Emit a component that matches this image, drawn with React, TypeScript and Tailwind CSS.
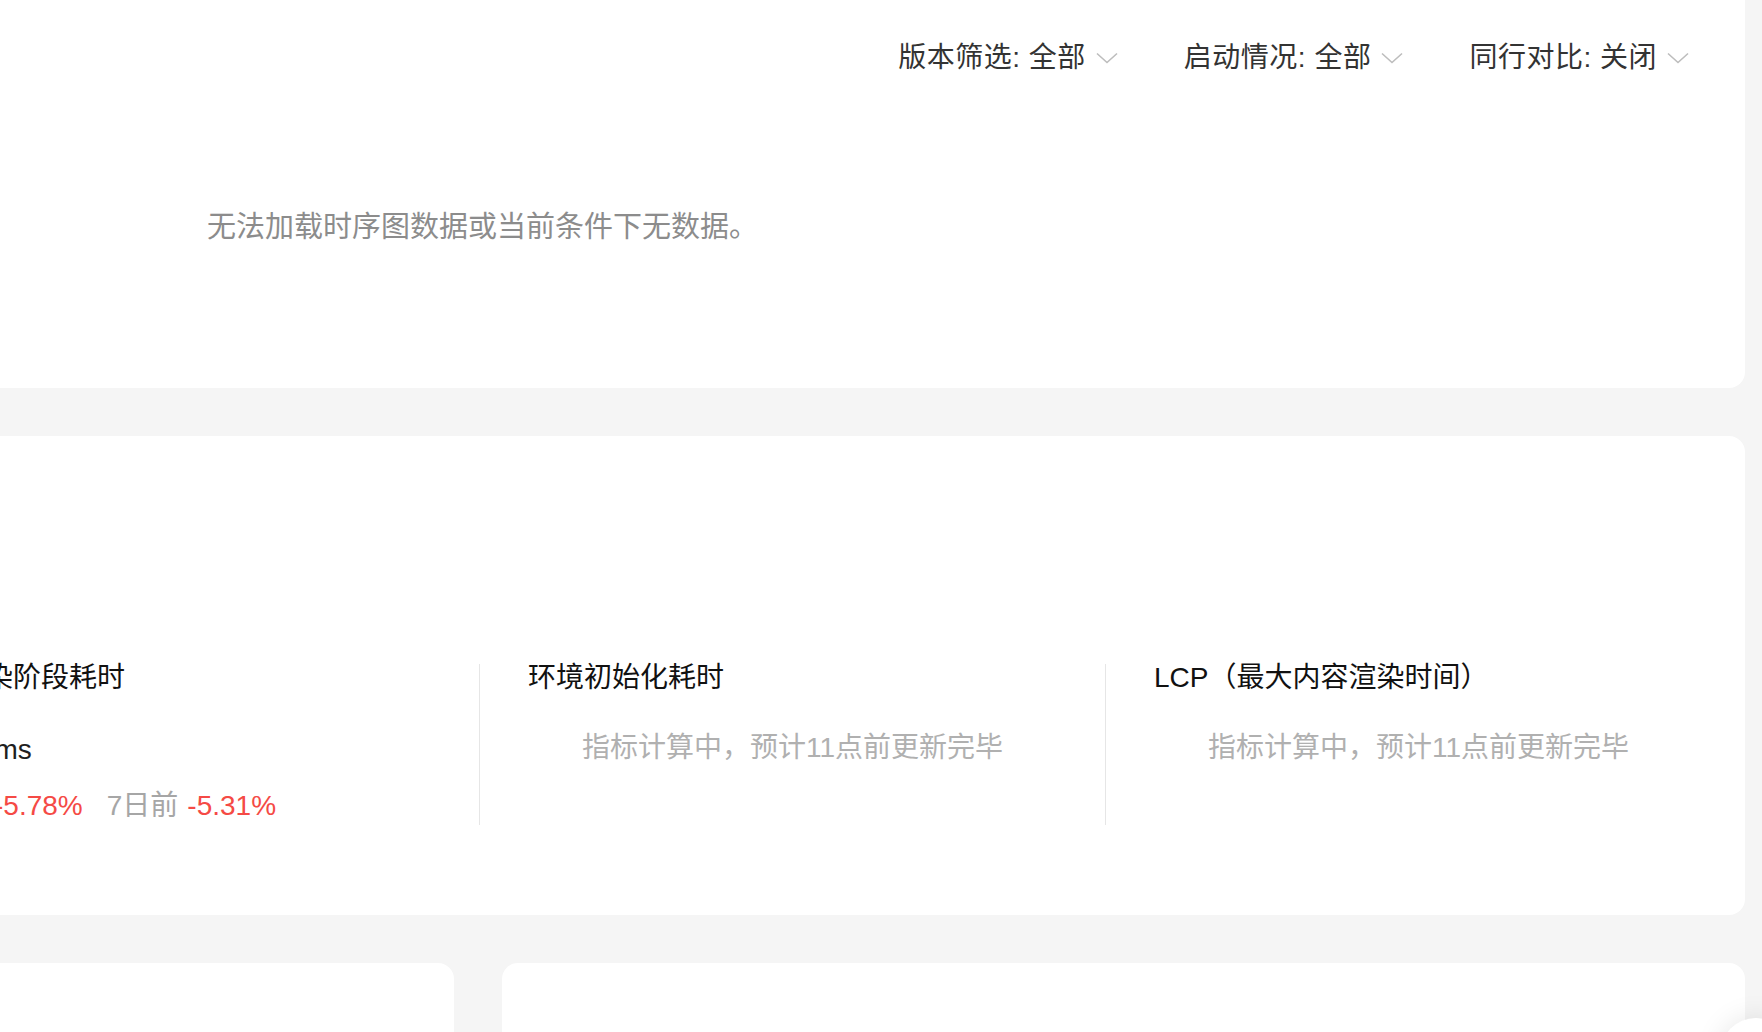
import React from "react";

const font = "font-['Liberation_Sans','Noto_Sans_CJK_SC',sans-serif]";

function Chevron() {
  return (
    <svg width="22" height="12" viewBox="0 0 22 12" fill="none" className="ml-[10px]">
      <path d="M1 1.5 L11 10.5 L21 1.5" stroke="#bdbdbd" strokeWidth="1.6" />
    </svg>
  );
}

function Filter({ label, value }: { label: string; value: string }) {
  return (
    <div className="flex items-center text-[28px] leading-[40px] tracking-[0.5px] text-[#333333]">
      <span>
        {label}: {value}
      </span>
      <Chevron />
    </div>
  );
}

function MetricPending({ title }: { title: string }) {
  return (
    <div className="flex h-[161px] w-[626px] shrink-0 flex-col border-l border-[#e6e6e6]">
      <div className="pl-12 text-[28px] leading-[28px] text-[#111111]">{title}</div>
      <div className="mt-[42px] text-center text-[28px] leading-[28px] text-[#b0b0b0]">
        指标计算中，预计11点前更新完毕
      </div>
    </div>
  );
}

export default function App() {
  return (
    <main className={`min-h-screen h-[1032px] overflow-hidden bg-[#f5f5f5] ${font}`}>
      <div className="flex justify-end pr-[17px]">
        <div className="flex w-[1906px] shrink-0 flex-col">
          {/* timeline card */}
          <section className="h-[388px] rounded-b-2xl bg-white">
            <div className="flex h-[116px] items-center justify-end gap-[66px] pr-[56px]">
              <Filter label="版本筛选" value="全部" />
              <Filter label="启动情况" value="全部" />
              <Filter label="同行对比" value="关闭" />
            </div>
            <p className="pl-[368px] pt-[91px] text-[29px] leading-[40px] text-[#8c8c8c]">
              无法加载时序图数据或当前条件下无数据。
            </p>
          </section>

          {/* metrics card */}
          <section className="mt-12 h-[479px] rounded-2xl bg-white px-[14px] pt-[228px]">
            <div className="flex">
              <div className="flex h-[161px] w-[626px] shrink-0 flex-col">
                <div className="pl-12 text-[28px] leading-[28px] text-[#111111]">页面渲染阶段耗时</div>
                <div className="mt-[44px] pl-12 text-[28px] leading-[28px] text-[#1f1f1f]">1532.6 ms</div>
                <div className="mt-[28px] flex gap-6 pl-12 text-[28px] leading-[28px]">
                  <span className="flex gap-[9px]">
                    <span className="text-[#a6a6a6]">日环比</span>
                    <span className="text-[#f54a45]">-5.78%</span>
                  </span>
                  <span className="flex gap-[9px]">
                    <span className="text-[#a6a6a6]">7日前</span>
                    <span className="text-[#f54a45]">-5.31%</span>
                  </span>
                </div>
              </div>
              <MetricPending title="环境初始化耗时" />
              <MetricPending title="LCP（最大内容渲染时间）" />
            </div>
          </section>

          {/* lower cards */}
          <div className="mt-12 flex gap-12">
            <section className="h-[400px] w-[615px] shrink-0 rounded-2xl bg-white" />
            <section className="h-[400px] flex-1 rounded-2xl bg-white" />
          </div>
        </div>
      </div>

      {/* floating helper button */}
      <div className="fixed left-[1720px] top-[1018px] h-[72px] w-[72px] rounded-full bg-white shadow-[0_0_28px_rgba(0,0,0,0.10)]" />
    </main>
  );
}
